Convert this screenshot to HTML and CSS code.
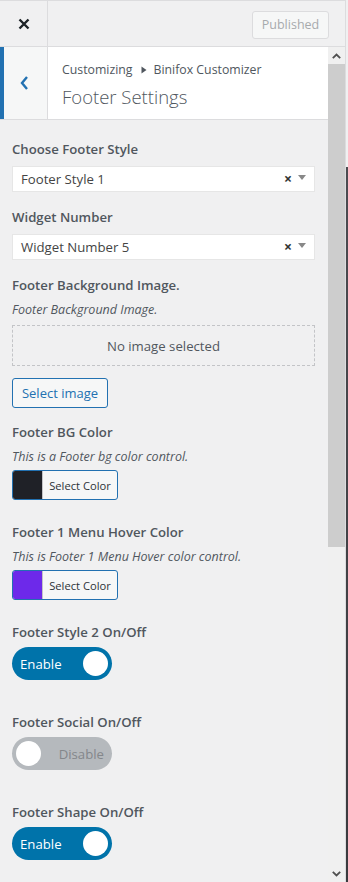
FILE: index.html
```html
<!DOCTYPE html>
<html lang="en">
<head>
<meta charset="utf-8">
<title>Customizer – Footer Settings</title>
<link rel="stylesheet" href="styles.css">
</head>
<body>
<div class="app">
  <div class="sidebar">
    <header class="topbar">
      <button class="close-btn" aria-label="Close">
        <svg width="12" height="12" viewBox="0 0 12 12"><path d="M1.5 1.5 L10.5 10.5 M10.5 1.5 L1.5 10.5" stroke="#1d2327" stroke-width="2.4" stroke-linecap="butt"/></svg>
      </button>
      <div class="topbar-spacer"></div>
      <button class="published-btn" disabled>Published</button>
    </header>
    <div class="scroll-area">
      <div class="scroll-content">
        <div class="section-head">
          <button class="back-btn" aria-label="Back">
            <svg width="10" height="16" viewBox="0 0 10 16"><path d="M8 2 L3 8 L8 14" fill="none" stroke="#2271b1" stroke-width="2.4"/></svg>
          </button>
          <div class="section-titles">
            <div class="crumbs">Customizing <svg class="crumb-arrow" width="6" height="8" viewBox="0 0 6 8"><path d="M0.5 0.5 L5.5 4 L0.5 7.5 Z" fill="#50575e"/></svg> Binifox Customizer</div>
            <h1 class="section-title">Footer Settings</h1>
          </div>
        </div>

        <div class="controls">
          <div class="control">
            <label class="ctl-label">Choose Footer Style</label>
            <div class="select">
              <span class="select-value">Footer Style 1</span>
              <span class="select-clear">×</span>
              <span class="select-arrow"></span>
            </div>
          </div>

          <div class="control">
            <label class="ctl-label">Widget Number</label>
            <div class="select">
              <span class="select-value">Widget Number 5</span>
              <span class="select-clear">×</span>
              <span class="select-arrow"></span>
            </div>
          </div>

          <div class="control control-image">
            <label class="ctl-label">Footer Background Image.</label>
            <div class="ctl-desc">Footer Background Image.</div>
            <div class="placeholder">No image selected</div>
            <button class="btn-outline">Select image</button>
          </div>

          <div class="control control-color">
            <label class="ctl-label">Footer BG Color</label>
            <div class="ctl-desc desc-tight">This is a Footer bg color control.</div>
            <button class="color-btn"><span class="swatch" style="background:#1f2127"></span><span class="color-text">Select Color</span></button>
          </div>

          <div class="control control-color">
            <label class="ctl-label">Footer 1 Menu Hover Color</label>
            <div class="ctl-desc desc-tight">This is Footer 1 Menu Hover color control.</div>
            <button class="color-btn"><span class="swatch" style="background:#6d29ea"></span><span class="color-text">Select Color</span></button>
          </div>

          <div class="control control-toggle">
            <label class="ctl-label">Footer Style 2 On/Off</label>
            <div class="toggle on"><span class="toggle-text">Enable</span><span class="knob"></span></div>
          </div>

          <div class="control control-toggle">
            <label class="ctl-label">Footer Social On/Off</label>
            <div class="toggle off"><span class="knob"></span><span class="toggle-text">Disable</span></div>
          </div>

          <div class="control control-toggle">
            <label class="ctl-label">Footer Shape On/Off</label>
            <div class="toggle on"><span class="toggle-text">Enable</span><span class="knob"></span></div>
          </div>
        </div>
      </div>
      <div class="scrollbar">
        <div class="sb-btn">
          <svg width="9" height="6" viewBox="0 0 9 6"><path d="M0.8 5.2 L4.5 1.5 L8.2 5.2" fill="none" stroke="#505050" stroke-width="1.8"/></svg>
        </div>
        <div class="sb-thumb"></div>
        <div class="sb-track"></div>
        <div class="sb-btn">
          <svg width="9" height="6" viewBox="0 0 9 6"><path d="M0.8 0.8 L4.5 4.5 L8.2 0.8" fill="none" stroke="#505050" stroke-width="1.8"/></svg>
        </div>
      </div>
    </div>
  </div>
  <div class="preview"></div>
</div>
</body>
</html>
```

FILE: styles.css
```css
* { box-sizing: border-box; }
html, body {
  margin: 0;
  padding: 0;
  height: 882px;
  overflow: hidden;
  background: #f0f0f1;
  font-family: "Open Sans", "Noto Sans", "Liberation Sans", sans-serif;
  color: #50575e;
}
.app {
  display: flex;
  width: 348px;
  height: 882px;
}
.sidebar {
  width: 346px;
  height: 882px;
  display: flex;
  flex-direction: column;
  border-right: 1px solid #dcdcde;
  background: #f0f0f1;
}
.preview {
  flex: 1;
  background: linear-gradient(to bottom, #f0f0f1 0, #f0f0f1 167px, #4b4b50 167px, #3a3a3e 100%);
}
.topbar {
  display: flex;
  align-items: center;
  height: 47px;
  border-top: 1px solid #dcdcde;
  border-bottom: 1px solid #dcdcde;
  flex: none;
}
.close-btn {
  width: 48px;
  height: 45px;
  border: 0;
  border-right: 1px solid #dcdcde;
  background: #f0f0f1;
  padding: 0;
  display: flex;
  align-items: center;
  justify-content: center;
}
.topbar-spacer { flex: 1; }
.published-btn {
  width: 77px;
  height: 28px;
  margin-right: 16px;
  margin-top: 2px;
  border: 1px solid #dcdcde;
  border-radius: 3px;
  background: #f6f7f7;
  color: #a7aaad;
  font-family: inherit;
  font-size: 12.5px;
  padding: 0;
}
.scroll-area {
  flex: 1;
  display: flex;
  min-height: 0;
}
.scroll-content {
  flex: 1;
  overflow: hidden;
}
.scrollbar {
  width: 17px;
  display: flex;
  flex-direction: column;
  background: #f0f0f0;
}
.sb-btn {
  height: 17px;
  display: flex;
  align-items: center;
  justify-content: center;
  flex: none;
}
.sb-thumb {
  height: 483px;
  background: #cdcdcd;
  flex: none;
}
.sb-track { flex: 1; }

.section-head {
  display: flex;
  height: 73px;
  border-bottom: 1px solid #dcdcde;
  background: #fff;
}
.back-btn {
  width: 48px;
  height: 72px;
  border: 0;
  border-left: 4px solid #2271b1;
  border-right: 1px solid #dcdcde;
  background: #f6f7f7;
  padding: 0 4px 0 0;
  display: flex;
  align-items: center;
  justify-content: center;
}
.section-titles {
  padding: 14px 0 0 14px;
}
.crumbs {
  font-size: 12.3px;
  line-height: 18px;
  color: #50575e;
  display: flex;
  align-items: center;
  white-space: nowrap;
}
.crumb-arrow { margin: 0 7px 0 8px; }
.section-title {
  margin: 6px 0 0;
  font-size: 18.5px;
  font-weight: 300;
  line-height: 24px;
  color: #50575e;
}

.controls {
  padding: 19px 13px 0 12px;
}
.control { margin-bottom: 15px; }
.control-image { margin-bottom: 14px; }
.control-color { margin-bottom: 22px; }
.control-toggle { margin-bottom: 32px; }
.ctl-label {
  display: block;
  font-size: 13.2px;
  font-weight: 600;
  line-height: 20px;
  color: #50575e;
  margin-bottom: 7px;
}
.control-toggle .ctl-label { margin-bottom: 5px; }
.control-image .ctl-label,
.control-color .ctl-label { margin-bottom: 6px; }
.ctl-desc {
  font-size: 12.5px;
  font-style: italic;
  line-height: 18px;
  color: #50575e;
  margin-bottom: 6px;
}
.desc-tight { margin-bottom: 4px; }
.select {
  display: flex;
  align-items: center;
  height: 26px;
  background: #fff;
  border: 1px solid #e6e6e6;
  padding: 0 8px 0 8px;
}
.select-value {
  flex: 1;
  font-size: 13.2px;
  color: #444;
}
.select-clear {
  font-size: 14px;
  font-weight: 700;
  color: #333;
  margin-right: 6px;
  line-height: 1;
}
.select-arrow {
  width: 0;
  height: 0;
  border-left: 4px solid transparent;
  border-right: 4px solid transparent;
  border-top: 5px solid #888;
  margin-top: -4px;
}
.placeholder {
  height: 41px;
  border: 1px dashed #c3c4c7;
  display: flex;
  align-items: center;
  justify-content: center;
  font-size: 13.2px;
  color: #50575e;
}
.btn-outline {
  margin-top: 12px;
  width: 96px;
  height: 30px;
  padding: 0;
  border: 1px solid #2271b1;
  border-radius: 3px;
  background: #f6f7f7;
  color: #2271b1;
  font-family: inherit;
  font-size: 13px;
}
.color-btn {
  display: flex;
  align-items: stretch;
  width: 106px;
  height: 30px;
  padding: 0;
  border: 1px solid #2271b1;
  border-radius: 3px;
  background: #f6f7f7;
  overflow: hidden;
  font-family: inherit;
}
.swatch {
  width: 30px;
  border-right: 1px solid #c3c4c7;
}
.color-text {
  flex: 1;
  display: flex;
  align-items: center;
  justify-content: center;
  font-size: 11.2px;
  color: #2c3338;
}
.toggle {
  display: flex;
  align-items: center;
  width: 100px;
  height: 33px;
  border-radius: 17px;
  padding: 0 4px 0 8px;
}
.toggle.on { background: #0073aa; }
.toggle.off { background: #b5b9bd; padding: 0 8px 0 4px; }
.toggle-text {
  flex: 1;
  font-size: 13.2px;
  color: #fff;
}
.toggle.off .toggle-text {
  color: #84878b;
  text-align: right;
}
.knob {
  width: 25px;
  height: 25px;
  border-radius: 50%;
  background: #fff;
  flex: none;
}
```
